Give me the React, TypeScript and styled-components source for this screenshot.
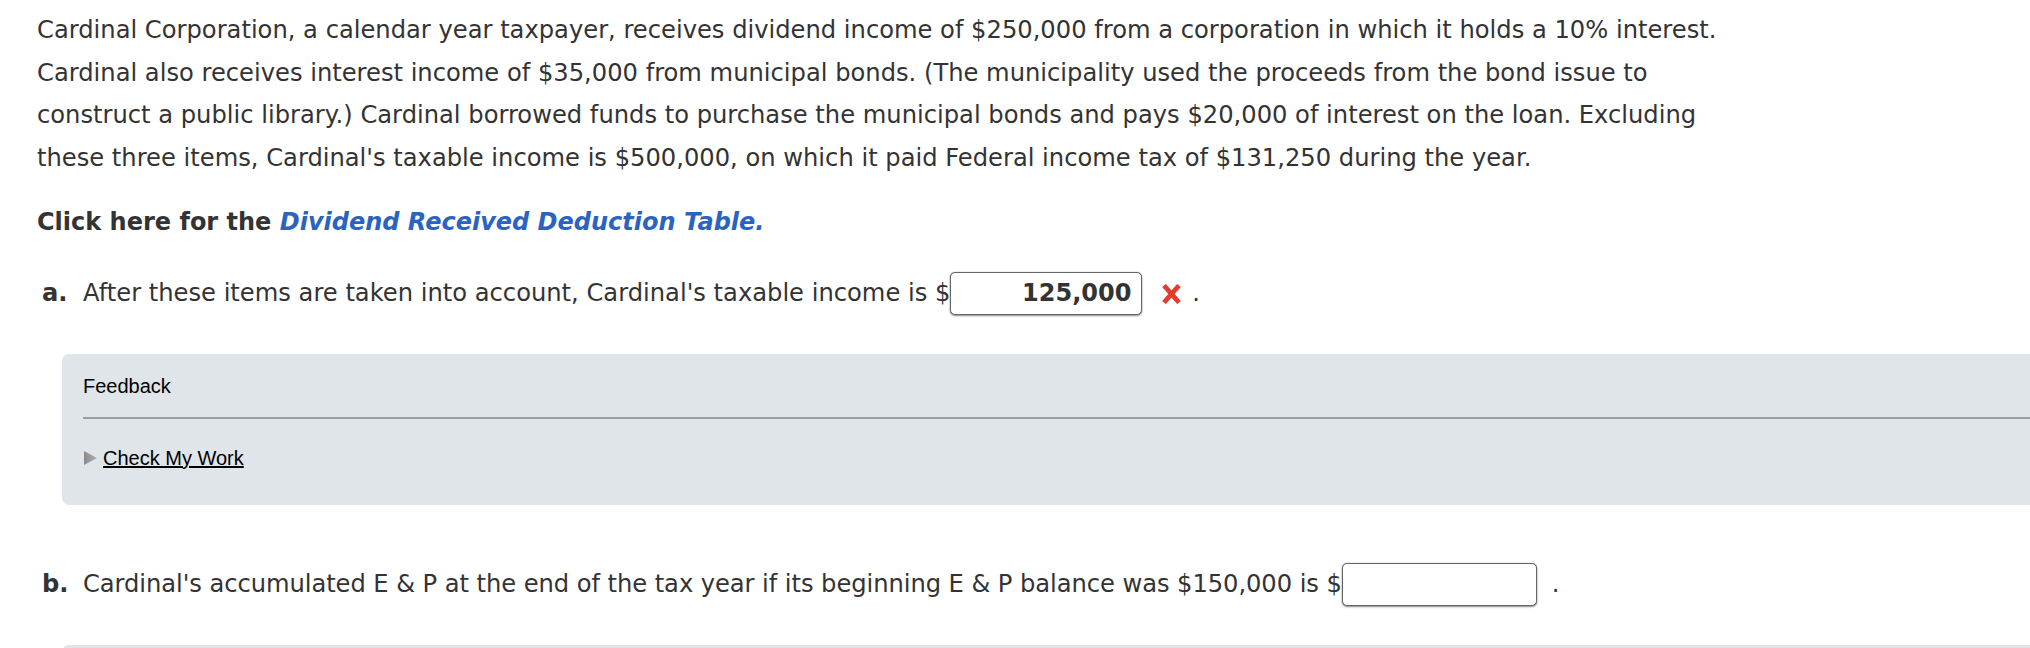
import React from "react";
import styled, { createGlobalStyle } from "styled-components";

const GlobalStyle = createGlobalStyle`
  html, body {
    margin: 0;
    padding: 0;
    background: #ffffff;
    overflow: hidden;
  }
`;

const Page = styled.div`
  padding: 9px 0 0 37px;
  font-family: Verdana, "DejaVu Sans", sans-serif;
  font-size: 24.2px;
  color: #333333;
`;

const Question = styled.p`
  margin: 0;
  line-height: 42.7px;
  white-space: nowrap;
`;

const ClickLine = styled.p`
  margin: 21px 0 0 0;
  line-height: 42.7px;
  font-size: 24px;
  font-weight: bold;
  white-space: nowrap;
`;

const TableLink = styled.a`
  color: #2a63c0;
  font-style: italic;
  text-decoration: none;
  cursor: pointer;
`;

const PartRow = styled.div<{ $top: number }>`
  display: flex;
  align-items: center;
  margin-top: ${(p) => p.$top}px;
  padding-left: 5px;
  height: 43px;
  white-space: nowrap;
`;

const PartLabel = styled.span`
  font-weight: bold;
  width: 41px;
  flex: none;
`;

const PartText = styled.span<{ $tracking?: number }>`
  letter-spacing: ${(p) => p.$tracking ?? 0}px;
`;

const AnswerInput = styled.input<{ $width: number }>`
  box-sizing: border-box;
  width: ${(p) => p.$width}px;
  height: 43px;
  margin: 0;
  padding: 0 10px 0 8px;
  border: 1px solid #666666;
  border-radius: 5px;
  box-shadow: 0 1px 2px rgba(0, 0, 0, 0.45), 0 0 1px rgba(0, 0, 0, 0.35);
  background: #ffffff;
  font-family: Verdana, "DejaVu Sans", sans-serif;
  font-size: 24px;
  font-weight: bold;
  color: #333333;
  text-align: right;
  outline: none;
`;

const WrongMark = styled.svg`
  width: 21px;
  height: 20px;
  margin-left: 19px;
  margin-top: 2px;
`;

const Period = styled.span<{ $gap: number }>`
  margin-left: ${(p) => p.$gap}px;
`;

const FeedbackBox = styled.div<{ $top: number; $height: number }>`
  box-sizing: border-box;
  margin: ${(p) => p.$top}px -40px 0 25px;
  height: ${(p) => p.$height}px;
  padding: 20px 21px 0 21px;
  background: #dfe5e8;
  border-radius: 7px;
  font-family: Arial, "Liberation Sans", sans-serif;
  font-size: 20px;
  color: #000000;
`;

const FeedbackTitle = styled.div`
  line-height: 24px;
`;

const Rule = styled.div`
  height: 2px;
  margin-top: 19px;
  background: #999fa3;
`;

const CheckRow = styled.div`
  display: flex;
  align-items: center;
  margin-top: 27px;
  line-height: 24px;
`;

const Triangle = styled.svg`
  width: 14px;
  height: 14px;
  margin-right: 5px;
  margin-left: 1px;
`;

const CheckLink = styled.a`
  color: #000000;
  text-decoration: underline;
  cursor: pointer;
`;

export default function App() {
  return (
    <>
      <GlobalStyle />
      <Page>
        <Question>
          Cardinal Corporation, a calendar year taxpayer, receives dividend income of $250,000 from a corporation in which it holds a 10% interest.
          <br />
          Cardinal also receives interest income of $35,000 from municipal bonds. (The municipality used the proceeds from the bond issue to
          <br />
          construct a public library.) Cardinal borrowed funds to purchase the municipal bonds and pays $20,000 of interest on the loan. Excluding
          <br />
          these three items, Cardinal's taxable income is $500,000, on which it paid Federal income tax of $131,250 during the year.
        </Question>

        <ClickLine>
          Click here for the <TableLink>Dividend Received Deduction Table.</TableLink>
        </ClickLine>

        <PartRow $top={28}>
          <PartLabel>a.</PartLabel>
          <PartText>After these items are taken into account, Cardinal's taxable income is $</PartText>
          <AnswerInput $width={192} defaultValue="125,000" readOnly />
          <WrongMark viewBox="0 0 21 20" aria-label="incorrect">
            <path d="M3 1.5 L18 18.5 M18 1.5 L3 18.5" stroke="#e53a2e" strokeWidth="4.8" fill="none" />
          </WrongMark>
          <Period $gap={10}>.</Period>
        </PartRow>

        <FeedbackBox $top={39} $height={151}>
          <FeedbackTitle>Feedback</FeedbackTitle>
          <Rule />
          <CheckRow>
            <Triangle viewBox="0 0 14 14">
              <defs>
                <linearGradient id="tri" x1="0" y1="0" x2="1" y2="0">
                  <stop offset="0" stopColor="#8a8a8a" />
                  <stop offset="1" stopColor="#b0b0b0" />
                </linearGradient>
              </defs>
              <polygon points="0,0 13,7 0,14" fill="url(#tri)" />
            </Triangle>
            <CheckLink>Check My Work</CheckLink>
          </CheckRow>
        </FeedbackBox>

        <PartRow $top={58}>
          <PartLabel>b.</PartLabel>
          <PartText $tracking={-0.06}>
            Cardinal's accumulated E &amp; P at the end of the tax year if its beginning E &amp; P balance was $150,000 is $
          </PartText>
          <AnswerInput $width={195} defaultValue="" readOnly />
          <Period $gap={15}>.</Period>
        </PartRow>

        <FeedbackBox $top={39} $height={4} />
      </Page>
    </>
  );
}
